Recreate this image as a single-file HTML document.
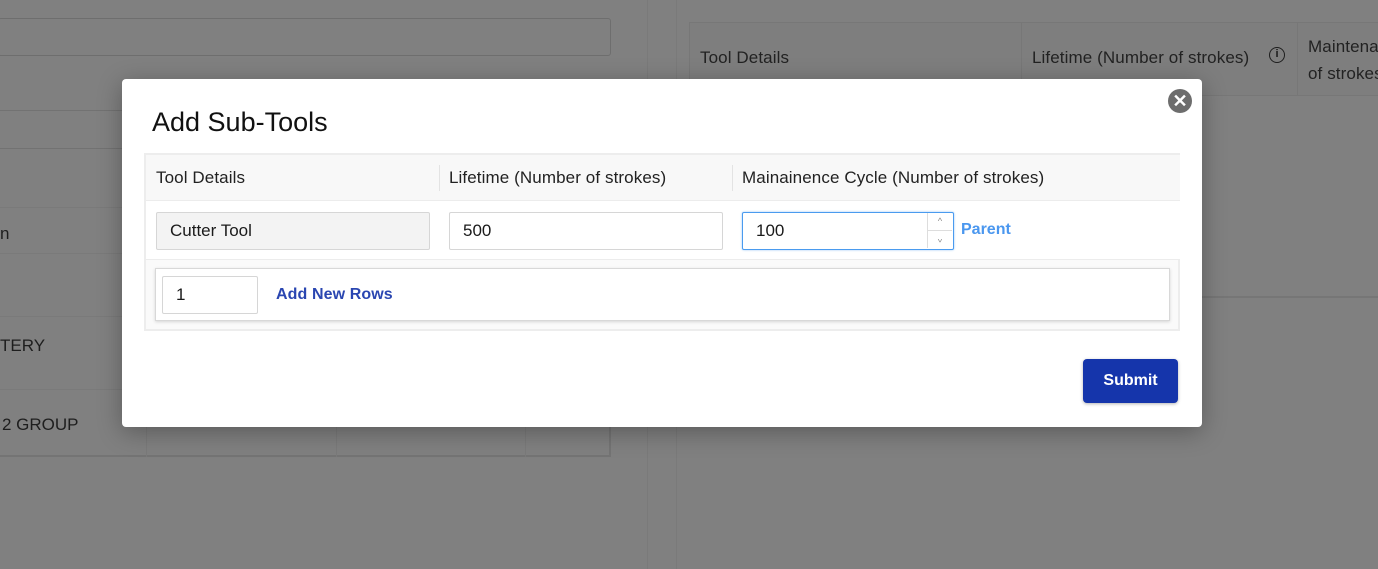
<!DOCTYPE html>
<html><head><style>
*{box-sizing:border-box;margin:0;padding:0}
body{width:1378px;height:569px;overflow:hidden;background:#808080;font-family:"Liberation Sans",sans-serif;position:relative;color:#1a1a1a}
.a{position:absolute;white-space:nowrap}
.bg{color:#1e1e1e;font-size:17px}
.h{font-size:17px;letter-spacing:.1px;color:#222}
</style></head><body>
<!-- background page -->
<div class="a" style="left:-2px;top:18px;width:613px;height:38px;border:1px solid #6e6e6e;border-radius:3px"></div>
<div class="a" style="left:0;top:110px;width:611px;height:1px;background:#727272"></div>
<div class="a" style="left:0;top:148px;width:611px;height:1px;background:#727272"></div>
<div class="a" style="left:0;top:207px;width:611px;height:250px;border-bottom:2px solid #747474;border-right:2px solid #747474;border-top:1px solid #7a7a7a"></div>
<div class="a" style="left:0;top:253px;width:611px;height:1px;background:#7a7a7a"></div>
<div class="a" style="left:0;top:316px;width:611px;height:1px;background:#7a7a7a"></div>
<div class="a" style="left:0;top:389px;width:611px;height:1px;background:#7a7a7a"></div>
<div class="a" style="left:146px;top:390px;width:1px;height:67px;background:#7a7a7a"></div>
<div class="a" style="left:336px;top:390px;width:1px;height:67px;background:#7a7a7a"></div>
<div class="a" style="left:525px;top:390px;width:1px;height:67px;background:#7a7a7a"></div>
<div class="a bg" style="left:0;top:224px">n</div>
<div class="a bg" style="left:0;top:336px">TERY</div>
<div class="a bg" style="left:2px;top:415px">2 GROUP</div>
<div class="a" style="left:647px;top:0;width:1px;height:569px;background:#7a7a7a"></div>
<div class="a" style="left:676px;top:0;width:1px;height:569px;background:#7a7a7a"></div>
<div class="a" style="left:689px;top:22px;width:700px;height:74px;border:1px solid #777;background:#7e7e7e"></div>
<div class="a" style="left:1021px;top:22px;width:1px;height:74px;background:#777"></div>
<div class="a" style="left:1297px;top:22px;width:1px;height:74px;background:#777"></div>
<div class="a" style="left:676px;top:296px;width:702px;height:2px;background:#767676"></div>
<div class="a bg h" style="left:700px;top:48px">Tool Details</div>
<div class="a bg h" style="left:1032px;top:48px">Lifetime (Number of strokes)</div>
<div class="a" style="left:1269px;top:47px;width:16px;height:16px;border:1.5px solid #1e1e1e;border-radius:50%;font-size:11px;text-align:center;line-height:13px;font-weight:bold">i</div>
<div class="a bg h" style="left:1308px;top:33px;line-height:27px">Maintena<br>of strokes</div>

<!-- modal -->
<div class="a" style="left:122px;top:79px;width:1080px;height:348px;background:#fff;border-radius:4px;box-shadow:0 5px 25px rgba(0,0,0,.3)">
  <div class="a" style="left:1046px;top:10px;width:24px;height:24px;border-radius:50%;background:#6d6d6d;color:#fff;font-size:18px;font-weight:bold;text-align:center;line-height:24px">✕</div>
  <div class="a" style="left:30px;top:28px;font-size:27px;color:#111">Add Sub-Tools</div>
  <div class="a" style="left:22px;top:74px;width:1036px;height:178px;border:2px solid #ededed;background:#fafafa">
    <div class="a" style="left:0;top:0;width:1034px;height:46px;background:#f8f8f8;border-bottom:1px solid #ececec"></div>
    <div class="a" style="left:293px;top:10px;width:1px;height:26px;background:#e3e3e3"></div>
    <div class="a" style="left:586px;top:10px;width:1px;height:26px;background:#e3e3e3"></div>
    <div class="a h" style="left:10px;top:13px">Tool Details</div>
    <div class="a h" style="left:303px;top:13px">Lifetime (Number of strokes)</div>
    <div class="a h" style="left:596px;top:13px">Mainainence Cycle (Number of strokes)</div>
    <div class="a" style="left:0;top:46px;width:1034px;height:59px;background:#fff;border-bottom:1px solid #ececec"></div>
    <div class="a" style="left:10px;top:57px;width:274px;height:38px;background:#f3f3f3;border:1px solid #d6d6d6;border-radius:2px;padding:8px 13px;font-size:17px">Cutter Tool</div>
    <div class="a" style="left:303px;top:57px;width:274px;height:38px;background:#fff;border:1px solid #d6d6d6;border-radius:2px;padding:8px 13px;font-size:17px">500</div>
    <div class="a" style="left:596px;top:57px;width:212px;height:38px;background:#fff;border:1.5px solid #4a9bef;border-radius:2px;padding:8px 13px;font-size:17px;box-shadow:0 0 2px #9cc8f5">100
      <div class="a" style="left:184px;top:0;width:25px;height:35px;border-left:1px solid #ddd;font-size:9px;color:#888;text-align:center;line-height:17px">^<br><span style="display:inline-block;transform:scaleY(-1)">^</span></div>
      <div class="a" style="left:184px;top:17px;width:25px;height:1px;background:#ddd"></div>
    </div>
    <div class="a" style="left:815px;top:66px;font-size:16px;font-weight:bold;color:#4a97ef">Parent</div>
    <div class="a" style="left:9px;top:113px;width:1015px;height:53px;background:#fff;border:1px solid #d8d8d8;box-shadow:0 1px 3px rgba(0,0,0,.15)">
      <div class="a" style="left:6px;top:7px;width:96px;height:38px;border:1px solid #d6d6d6;border-radius:2px;padding:8px 13px;font-size:17px">1</div>
      <div class="a" style="left:120px;top:17px;font-size:16px;font-weight:bold;color:#2a46b1;letter-spacing:.1px">Add New Rows</div>
    </div>
  </div>
  <div class="a" style="left:961px;top:280px;width:95px;height:44px;background:#1535ab;border-radius:4px;color:#fff;font-weight:bold;font-size:16px;text-align:center;line-height:44px;box-shadow:0 1px 3px rgba(0,0,0,.3)">Submit</div>
</div>
</body></html>
